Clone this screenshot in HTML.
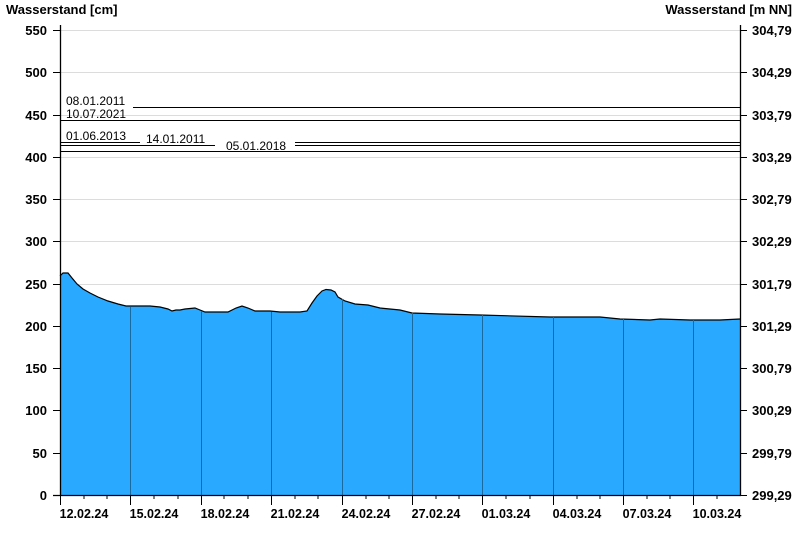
<!DOCTYPE html>
<html><head><meta charset="utf-8"><style>
html,body{margin:0;padding:0;background:#fff;width:800px;height:550px;overflow:hidden}
svg{display:block;font-family:"Liberation Sans",Arial,sans-serif}
.b{font-weight:bold;font-size:13px;fill:#000}
.d{font-weight:bold;font-size:12.5px;fill:#000}
.s{font-size:12px;fill:#000}
</style></head><body>
<svg width="800" height="550" viewBox="0 0 800 550">
<text class="b" x="6" y="14">Wasserstand [cm]</text>
<text class="b" x="792" y="14" text-anchor="end">Wasserstand [m NN]</text>
<g stroke="#dcdcdc" stroke-width="1">
<line x1="60" x2="740" y1="30.5" y2="30.5"/><line x1="60" x2="740" y1="72.5" y2="72.5"/><line x1="60" x2="740" y1="115.5" y2="115.5"/><line x1="60" x2="740" y1="157.5" y2="157.5"/><line x1="60" x2="740" y1="199.5" y2="199.5"/><line x1="60" x2="740" y1="241.5" y2="241.5"/><line x1="60" x2="740" y1="284.5" y2="284.5"/><line x1="60" x2="740" y1="326.5" y2="326.5"/><line x1="60" x2="740" y1="368.5" y2="368.5"/><line x1="60" x2="740" y1="410.5" y2="410.5"/><line x1="60" x2="740" y1="453.5" y2="453.5"/>
</g>
<polygon fill="#29a9ff" stroke="none" points="60,495 60,276 63,273 68,273 72,278 77,284 83,289 90,293 98,297 108,301 118,304 126,306 150,306 160,307 168,309 172,311 176,310 180,310 185,309 195,308 200,310 205,312 215,312 228,312 236,308 242,306 248,308 255,311 270,311 280,312 300,312 307,311 312,303 317,296 322,291 326,289.5 331,290 335,292 338,297 345,301 355,304 368,305 380,308 400,310 412,313 440,314 480,315 550,317 600,317 620,319 650,320 660,319 690,320 720,320 740,319 740,495"/>
<polyline fill="none" stroke="#000" stroke-width="1.2" points="60,276 63,273 68,273 72,278 77,284 83,289 90,293 98,297 108,301 118,304 126,306 150,306 160,307 168,309 172,311 176,310 180,310 185,309 195,308 200,310 205,312 215,312 228,312 236,308 242,306 248,308 255,311 270,311 280,312 300,312 307,311 312,303 317,296 322,291 326,289.5 331,290 335,292 338,297 345,301 355,304 368,305 380,308 400,310 412,313 440,314 480,315 550,317 600,317 620,319 650,320 660,319 690,320 720,320 740,319"/>
<g stroke="#1a6aa0" stroke-width="1">
<line x1="130.5" x2="130.5" y1="307" y2="495"/><line x1="201.5" x2="201.5" y1="311" y2="495"/><line x1="271.5" x2="271.5" y1="312" y2="495"/><line x1="342.5" x2="342.5" y1="299" y2="495"/><line x1="412.5" x2="412.5" y1="313" y2="495"/><line x1="482.5" x2="482.5" y1="315" y2="495"/><line x1="553.5" x2="553.5" y1="317" y2="495"/><line x1="623.5" x2="623.5" y1="319" y2="495"/><line x1="693.5" x2="693.5" y1="320" y2="495"/>
</g>
<g stroke="#000" stroke-width="1">
<line x1="133" x2="740" y1="107.5" y2="107.5"/>
<line x1="60" x2="740" y1="120.5" y2="120.5"/>
<line x1="60" x2="140" y1="142.5" y2="142.5"/><line x1="295" x2="740" y1="142.5" y2="142.5"/>
<line x1="60" x2="215" y1="145.5" y2="145.5"/><line x1="295" x2="740" y1="145.5" y2="145.5"/>
<line x1="60" x2="740" y1="151.5" y2="151.5"/>
</g>
<text class="s" x="66" y="105">08.01.2011</text>
<text class="s" x="66" y="118">10.07.2021</text>
<text class="s" x="66" y="140">01.06.2013</text>
<text class="s" x="146" y="143">14.01.2011</text>
<text class="s" x="226" y="150">05.01.2018</text>
<g stroke="#000" stroke-width="1.3">
<line x1="60.5" x2="60.5" y1="25" y2="495"/><line x1="740.5" x2="740.5" y1="25" y2="495"/>
<line x1="53" x2="741" y1="495.5" y2="495.5"/>
</g>
<g stroke="#000" stroke-width="1">
<line x1="53" x2="60" y1="30.5" y2="30.5"/><line x1="53" x2="60" y1="72.5" y2="72.5"/><line x1="53" x2="60" y1="115.5" y2="115.5"/><line x1="53" x2="60" y1="157.5" y2="157.5"/><line x1="53" x2="60" y1="199.5" y2="199.5"/><line x1="53" x2="60" y1="241.5" y2="241.5"/><line x1="53" x2="60" y1="284.5" y2="284.5"/><line x1="53" x2="60" y1="326.5" y2="326.5"/><line x1="53" x2="60" y1="368.5" y2="368.5"/><line x1="53" x2="60" y1="410.5" y2="410.5"/><line x1="53" x2="60" y1="453.5" y2="453.5"/>
<line x1="740" x2="747" y1="30.5" y2="30.5"/><line x1="740" x2="747" y1="72.5" y2="72.5"/><line x1="740" x2="747" y1="115.5" y2="115.5"/><line x1="740" x2="747" y1="157.5" y2="157.5"/><line x1="740" x2="747" y1="199.5" y2="199.5"/><line x1="740" x2="747" y1="241.5" y2="241.5"/><line x1="740" x2="747" y1="284.5" y2="284.5"/><line x1="740" x2="747" y1="326.5" y2="326.5"/><line x1="740" x2="747" y1="368.5" y2="368.5"/><line x1="740" x2="747" y1="410.5" y2="410.5"/><line x1="740" x2="747" y1="453.5" y2="453.5"/><line x1="740" x2="747" y1="495.5" y2="495.5"/>
<line x1="60.5" x2="60.5" y1="495" y2="505"/><line x1="130.5" x2="130.5" y1="495" y2="505"/><line x1="201.5" x2="201.5" y1="495" y2="505"/><line x1="271.5" x2="271.5" y1="495" y2="505"/><line x1="342.5" x2="342.5" y1="495" y2="505"/><line x1="412.5" x2="412.5" y1="495" y2="505"/><line x1="482.5" x2="482.5" y1="495" y2="505"/><line x1="553.5" x2="553.5" y1="495" y2="505"/><line x1="623.5" x2="623.5" y1="495" y2="505"/><line x1="693.5" x2="693.5" y1="495" y2="505"/>
<line x1="84" x2="84" y1="495" y2="499"/><line x1="107" x2="107" y1="495" y2="499"/><line x1="154" x2="154" y1="495" y2="499"/><line x1="178" x2="178" y1="495" y2="499"/><line x1="224" x2="224" y1="495" y2="499"/><line x1="248" x2="248" y1="495" y2="499"/><line x1="295" x2="295" y1="495" y2="499"/><line x1="318" x2="318" y1="495" y2="499"/><line x1="366" x2="366" y1="495" y2="499"/><line x1="389" x2="389" y1="495" y2="499"/><line x1="436" x2="436" y1="495" y2="499"/><line x1="459" x2="459" y1="495" y2="499"/><line x1="506" x2="506" y1="495" y2="499"/><line x1="530" x2="530" y1="495" y2="499"/><line x1="577" x2="577" y1="495" y2="499"/><line x1="600" x2="600" y1="495" y2="499"/><line x1="647" x2="647" y1="495" y2="499"/><line x1="670" x2="670" y1="495" y2="499"/><line x1="717" x2="717" y1="495" y2="499"/>
</g>
<g text-anchor="end">
<text class="b" x="47" y="35">550</text><text class="b" x="47" y="77">500</text><text class="b" x="47" y="120">450</text><text class="b" x="47" y="162">400</text><text class="b" x="47" y="204">350</text><text class="b" x="47" y="246">300</text><text class="b" x="47" y="289">250</text><text class="b" x="47" y="331">200</text><text class="b" x="47" y="373">150</text><text class="b" x="47" y="415">100</text><text class="b" x="47" y="458">50</text><text class="b" x="47" y="500">0</text>
</g>
<g>
<text class="b" x="752" y="35">304,79</text><text class="b" x="752" y="77">304,29</text><text class="b" x="752" y="120">303,79</text><text class="b" x="752" y="162">303,29</text><text class="b" x="752" y="204">302,79</text><text class="b" x="752" y="246">302,29</text><text class="b" x="752" y="289">301,79</text><text class="b" x="752" y="331">301,29</text><text class="b" x="752" y="373">300,79</text><text class="b" x="752" y="415">300,29</text><text class="b" x="752" y="458">299,79</text><text class="b" x="752" y="500">299,29</text>
</g>
<g text-anchor="middle">
<text class="d" x="84" y="518">12.02.24</text><text class="d" x="154" y="518">15.02.24</text><text class="d" x="225" y="518">18.02.24</text><text class="d" x="295" y="518">21.02.24</text><text class="d" x="366" y="518">24.02.24</text><text class="d" x="436" y="518">27.02.24</text><text class="d" x="506" y="518">01.03.24</text><text class="d" x="577" y="518">04.03.24</text><text class="d" x="647" y="518">07.03.24</text><text class="d" x="717" y="518">10.03.24</text>
</g>
</svg>
</body></html>
